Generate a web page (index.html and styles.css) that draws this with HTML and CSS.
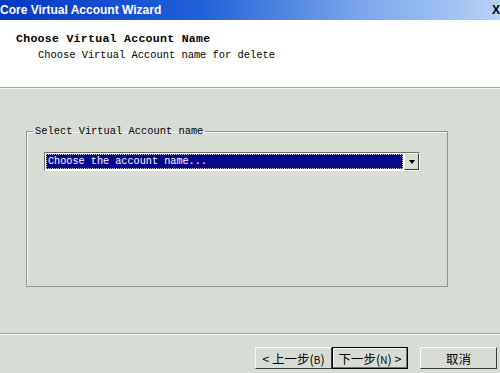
FILE: index.html
```html
<!DOCTYPE html>
<html lang="en">
<head>
    <meta charset="UTF-8">
    <title>Core Virtual Account Wizard</title>
    <link rel="stylesheet" href="styles.css">
</head>
<body>
    <div class="wizard">
        <div class="titlebar">
            <span class="title">Core Virtual Account Wizard</span>
            <span class="close">X</span>
        </div>
        <div class="header">
            <div class="header-title">Choose Virtual Account Name</div>
            <div class="header-sub">Choose Virtual Account name for delete</div>
        </div>
        <div class="content">
            <fieldset class="group">
                <legend>Select Virtual Account name</legend>
                <div class="combo">
                    <div class="combo-text">Choose the account name...</div>
                    <div class="combo-btn"><span class="arrow"></span></div>
                </div>
            </fieldset>
        </div>
        <div class="footer">
            <button class="btn">&lt; 上一步(<u>B</u>)</button>
            <button class="btn default">下一步(<u>N</u>) &gt;</button>
            <button class="btn cancel">取消</button>
        </div>
    </div>
</body>
</html>
```

FILE: styles.css
```css
html, body {
    margin: 0;
    width: 500px;
    height: 373px;
    overflow: hidden;
}

.wizard {
    display: flex;
    flex-direction: column;
    height: 373px;
    background: #d7ddd4;
    font-family: "Liberation Mono", monospace;
}

.titlebar {
    height: 20px;
    display: flex;
    align-items: center;
    justify-content: space-between;
    background: linear-gradient(to right, #0438c4 0%, #2260d8 40%, #7aa6ea 72%, #b6d2f6 100%);
}

.title {
    margin-left: 0;
    color: #fff;
    font: bold 12px "Liberation Sans", sans-serif;
}

.close {
    width: 8px;
    overflow: hidden;
    color: #000;
    font: bold 12px "Liberation Sans", sans-serif;
}

.header {
    height: 68px;
    background: #fff;
    border-bottom: 1px solid #a0a6a0;
    box-shadow: 0 1px 0 #f4f6f2;
    padding: 12px 0 0 16px;
    box-sizing: border-box;
}

.header-title {
    font-weight: bold;
    font-size: 11.5px;
    letter-spacing: 0.3px;
    color: #000;
}

.header-sub {
    margin: 4px 0 0 22px;
    font-size: 10.4px;
    color: #000;
}

.content {
    flex: 1;
    padding: 37px 0 0 26px;
    border-bottom: 1px solid #a0a6a0;
    box-shadow: 0 1px 0 #f4f6f2;
}

.group {
    width: 422px;
    height: 162px;
    margin: 0;
    padding: 15px 0 0 17px;
    box-sizing: border-box;
    border: 1px solid #8e948e;
    box-shadow: inset 1px 1px 0 #f2f4f0;
}

.group legend {
    padding: 0 2px;
    margin-left: -11px;
    font-size: 10.4px;
    color: #000;
}

.combo {
    width: 376px;
    height: 19px;
    display: flex;
    box-sizing: border-box;
    border: 1px solid #6f746f;
    border-right-color: #f6f8f4;
    border-bottom-color: #f6f8f4;
    background: #fff;
}

.combo-text {
    flex: 1;
    margin: 1px;
    padding-left: 2px;
    background: #08088c;
    outline: 1px dotted #c8c8d8;
    outline-offset: -1px;
    color: #fff;
    font-size: 10.2px;
    line-height: 15px;
}

.combo-btn {
    width: 15px;
    display: flex;
    align-items: center;
    justify-content: center;
    background: #d7ddd4;
    border: 1px solid #3a3e3a;
    border-top-color: #f6f8f4;
    border-left-color: #f6f8f4;
    box-sizing: border-box;
}

.arrow {
    border-left: 3.5px solid transparent;
    border-right: 3.5px solid transparent;
    border-top: 4px solid #000;
}

.footer {
    height: 39px;
    display: flex;
    align-items: flex-start;
    padding: 13px 0 0 255px;
    box-sizing: border-box;
}

.btn {
    width: 77px;
    height: 22px;
    margin: 0;
    padding: 0;
    background: #d7ddd4;
    border: 1px solid #3a3e3a;
    border-top-color: #fafcf8;
    border-left-color: #fafcf8;
    font: 12.5px "Noto Sans CJK SC", sans-serif;
    color: #000;
}

.btn u {
    text-decoration: none;
    font-size: 10px;
}

.default {
    width: 76px;
    border: 1px solid #000;
    box-shadow: inset -1px -1px 0 #6f746f, inset 1px 1px 0 #fafcf8;
}

.cancel {
    margin-left: 12px;
}
```
